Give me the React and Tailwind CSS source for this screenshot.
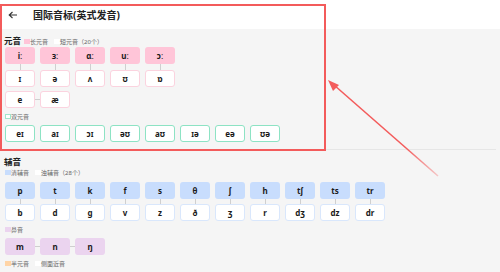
import React from "react";

const FONT = { fontFamily: '"Noto Sans", "DejaVu Sans", "Noto Sans CJK SC", sans-serif' };

function Box({ s, cls }) {
  return (
    <div className={`w-[30px] h-[17px] rounded-[3px] flex items-center justify-center text-[8px] font-bold leading-none text-[#1a1a1a] ${cls}`}>
      {s}
    </div>
  );
}

function Pair({ top, bottom, topCls, botCls, gap }) {
  return (
    <div className="flex flex-col items-center">
      <Box s={top} cls={topCls} />
      <div className={`w-px ${gap} bg-[#cfcfcf]`} />
      <Box s={bottom} cls={botCls} />
    </div>
  );
}

function Legend({ items }) {
  return (
    <div className="flex items-center h-[9px] text-[6px] leading-none text-[#666]">
      {items.map((it, i) => (
        <div key={i} className={`flex items-center ${i > 0 ? "ml-[6px]" : ""}`}>
          <div className={`w-[5.5px] h-[5.5px] ${it.sq}`} />
          <span className="ml-[0.5px]">{it.t}</span>
        </div>
      ))}
    </div>
  );
}

const H = () => <div className="w-[5px] h-px bg-[#cfcfcf]" />;

export default function App() {
  const longV = ["iː", "ɜː", "ɑː", "uː", "ɔː"];
  const shortV = ["ɪ", "ə", "ʌ", "ʊ", "ɒ"];
  const diph = ["eɪ", "aɪ", "ɔɪ", "əʊ", "aʊ", "ɪə", "eə", "ʊə"];
  const vl = ["p", "t", "k", "f", "s", "θ", "ʃ", "h", "tʃ", "ts", "tr"];
  const vd = ["b", "d", "g", "v", "z", "ð", "ʒ", "r", "dʒ", "dz", "dr"];
  const pink = "bg-[#ffc5d8]";
  const pinkB = "bg-white border border-[#fbd3df]";
  const blue = "bg-[#c8ddfd]";
  const blueB = "bg-white border border-[#d9e7fc]";
  const purple = "bg-[#ebd4ef]";
  return (
    <div className="relative w-[500px] h-[272px] overflow-hidden bg-[#f5f5f5]" style={FONT}>
      <div className="h-[29px] bg-white flex items-center">
        <svg width="10" height="8" viewBox="0 0 10 8" className="ml-[8px]">
          <path d="M9 4H1.5M4.5 1L1.2 4l3.3 3" fill="none" stroke="#333" strokeWidth="1.1" />
        </svg>
        <span className="ml-[15px] text-[10px] font-bold text-[#222] leading-none">国际音标(英式发音)</span>
      </div>

      <div className="px-[5px] pt-[7px]">
        <div className="flex items-center h-[11px]">
          <span className="text-[8.5px] font-bold text-[#222] leading-none -ml-[1px]">元音</span>
          <div className="ml-[3px]">
            <Legend items={[{ sq: "bg-[#ffc5d8]", t: "长元音" }, { sq: "bg-white", t: "短元音（20个）" }]} />
          </div>
        </div>
        <div className="flex gap-[5px]">
          {longV.map((v, i) => (
            <Pair key={i} top={v} bottom={shortV[i]} topCls={pink} botCls={pinkB} gap="h-[6px]" />
          ))}
        </div>
        <div className="flex items-center mt-[4px]">
          <Box s="e" cls={pinkB} />
          <H />
          <Box s="æ" cls={pinkB} />
        </div>
        <div className="mt-[4px]">
          <Legend items={[{ sq: "bg-white border border-[#9fe6cc]", t: "双元音" }]} />
        </div>
        <div className="flex gap-[5px] mt-[4px]">
          {diph.map((d) => (
            <Box key={d} s={d} cls="bg-white border border-[#8de3c4]" />
          ))}
        </div>
      </div>

      <div className="mt-[7px] mx-[4px] h-px bg-[#e6e6e6]" />

      <div className="px-[5px] pt-[7px]">
        <div className="flex items-center h-[11px]">
          <span className="text-[8.5px] font-bold text-[#222] leading-none -ml-[1px]">辅音</span>
        </div>
        <Legend items={[{ sq: "bg-[#c8ddfd]", t: "清辅音" }, { sq: "bg-white", t: "浊辅音（28个）" }]} />
        <div className="flex gap-[5px] mt-[5px]">
          {vl.map((v, i) => (
            <Pair key={i} top={v} bottom={vd[i]} topCls={blue} botCls={blueB} gap="h-[5px]" />
          ))}
        </div>
        <div className="mt-[4px]">
          <Legend items={[{ sq: "bg-[#ebd4ef]", t: "鼻音" }]} />
        </div>
        <div className="flex items-center mt-[4px]">
          <Box s="m" cls={purple} />
          <H />
          <Box s="n" cls={purple} />
          <H />
          <Box s="ŋ" cls={purple} />
        </div>
        <div className="mt-[4px]">
          <Legend items={[{ sq: "bg-[#ffd4a6]", t: "半元音" }, { sq: "bg-white", t: "侧面近音" }]} />
        </div>
      </div>

      <div className="absolute left-0 top-[4px] w-[326px] h-[147px] border-2 border-[#f35b5b] pointer-events-none" />
      <svg className="absolute left-0 top-0 pointer-events-none" width="500" height="272" viewBox="0 0 500 272">
        <defs>
          <linearGradient id="g" x1="438" y1="176" x2="330" y2="82" gradientUnits="userSpaceOnUse">
            <stop offset="0" stopColor="#f35b5b" stopOpacity="0.3" />
            <stop offset="0.3" stopColor="#f35b5b" stopOpacity="1" />
          </linearGradient>
        </defs>
        <line x1="438" y1="176" x2="334" y2="85" stroke="url(#g)" strokeWidth="1.6" />
        <path d="M328 80 L339 85 L333 91 Z" fill="#f35b5b" />
      </svg>
    </div>
  );
}
